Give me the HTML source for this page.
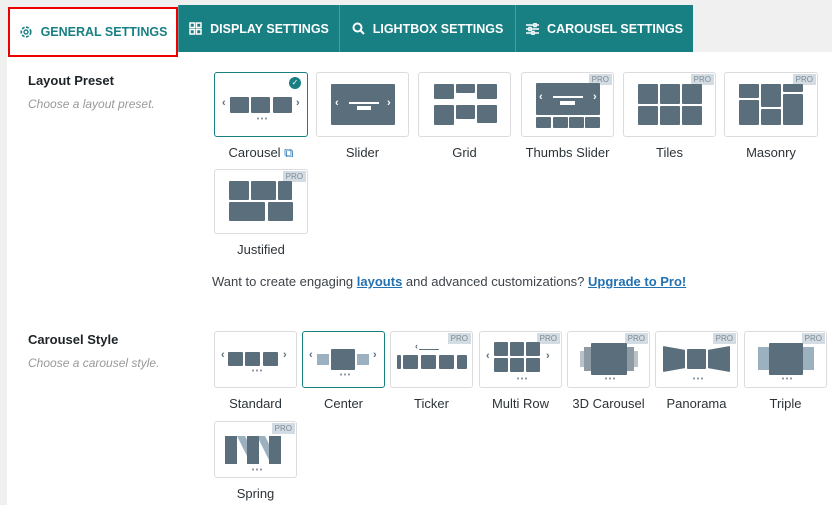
<!DOCTYPE html>
<html><head><meta charset="utf-8"><style>
*{margin:0;padding:0;box-sizing:border-box}
body{width:832px;height:505px;overflow:hidden;background:#f0f0f1;font-family:"Liberation Sans",sans-serif;position:relative;color:#1d2327}
.a{position:absolute}
.main{left:7px;top:52px;width:825px;height:453px;background:#fff}
.tab{top:5px;height:47px;background:#187f83;color:#fff;font-size:12.5px;font-weight:bold;display:flex;align-items:center;justify-content:center;gap:8px;border-left:1px solid #4f9a9d}
.gen{left:8px;top:7px;width:170px;height:50px;background:#fff;border:2px solid #e00;color:#187f83;font-size:12.5px;font-weight:bold;display:flex;align-items:center;justify-content:center;gap:8px}
.h{font-size:13px;font-weight:bold;color:#1d2327}
.sub{font-size:12px;font-style:italic;color:#999}
.card{border:1.5px solid #dcdcde;border-radius:3px;background:#fff}
.sel{border:1.5px solid #187f83}
.lbl{font-size:13px;color:#2c3338;text-align:center}
.b{position:absolute;background:#5b6e7c;border-radius:1px}
.l{position:absolute;background:#9cb1c0}
.pro{position:absolute;right:1px;top:1px;background:#d4dce3;color:#7b8a96;font-size:8px;padding:1px 3px}
.ch{position:absolute;color:#5b6e7c;font-size:11px;font-weight:bold}
.dots{position:absolute;width:12px;height:3px;background:radial-gradient(circle,#8a98a3 1px,transparent 1.2px) 0 0/4px 3px}
a{color:#2271b1;font-weight:bold;text-decoration:underline}
</style></head><body>
<div class="a main"></div>
<div class="a gen"><svg width="14" height="14" viewBox="0 0 14 14"><circle cx="7" cy="7" r="4.8" fill="none" stroke="#187f83" stroke-width="1.6" stroke-dasharray="3 1.5"/><circle cx="7" cy="7" r="2" fill="none" stroke="#187f83" stroke-width="1.4"/></svg>GENERAL SETTINGS</div>
<div class="a tab" style="left:178px;width:161px"><svg width="13" height="13" viewBox="0 0 13 13" fill="none" stroke="#fff" stroke-width="1.5"><rect x="1" y="1" width="4.5" height="4.5"/><rect x="7.5" y="1" width="4.5" height="4.5"/><rect x="1" y="7.5" width="4.5" height="4.5"/><rect x="7.5" y="7.5" width="4.5" height="4.5"/></svg>DISPLAY SETTINGS</div>
<div class="a tab" style="left:339px;width:176px"><svg width="13" height="13" viewBox="0 0 13 13" fill="none" stroke="#fff" stroke-width="2"><circle cx="5.5" cy="5.5" r="4"/><path d="M8.5 8.5L12 12"/></svg>LIGHTBOX SETTINGS</div>
<div class="a tab" style="left:515px;width:178px"><svg width="13" height="12" viewBox="0 0 13 12" stroke="#fff" stroke-width="1.5"><path d="M0 2H13M0 6H13M0 10H13"/><rect x="8" y="0.5" width="2" height="3" fill="#187f83"/><rect x="3" y="4.5" width="2" height="3" fill="#187f83"/><rect x="6" y="8.5" width="2" height="3" fill="#187f83"/></svg>CAROUSEL SETTINGS</div>

<div class="a h" style="left:28px;top:73px">Layout Preset</div>
<div class="a sub" style="left:28px;top:97px">Choose a layout preset.</div>

<div class="a card sel" style="left:214px;top:72px;width:94px;height:65px">
 <div style="position:absolute;right:6px;top:4px;width:12px;height:12px;border-radius:50%;background:#187f83;color:#fff;font-size:8px;text-align:center;line-height:12px">✓</div>
 <span class="ch" style="left:7px;top:24px">‹</span><div class="b" style="left:15px;top:24px;width:19px;height:16px"></div><div class="b" style="left:36px;top:24px;width:19px;height:16px"></div><div class="b" style="left:58px;top:24px;width:19px;height:16px"></div><span class="ch" style="left:81px;top:24px">›</span>
 <div class="dots" style="left:41px;top:44px"></div></div>
<div class="a lbl" style="left:214px;top:145px;width:94px">Carousel <span style="color:#2271b1">⧉</span></div>
<div class="a card" style="left:316px;top:72px;width:93px;height:65px"><div class="b" style="left:14px;top:11px;width:64px;height:41px"></div><span class="ch" style="left:18px;top:24px;color:#fff">‹</span><span class="ch" style="left:70px;top:24px;color:#fff">›</span><div class="l" style="left:32px;top:29px;width:30px;height:2px;background:#fff"></div><div class="l" style="left:40px;top:33px;width:14px;height:4px;background:#fff"></div></div>
<div class="a lbl" style="left:316px;top:145px;width:93px">Slider</div>
<div class="a card" style="left:418px;top:72px;width:93px;height:65px"><div class="b" style="left:15px;top:11px;width:20px;height:15px"></div><div class="b" style="left:37px;top:11px;width:19px;height:9px"></div><div class="b" style="left:58px;top:11px;width:20px;height:15px"></div><div class="b" style="left:15px;top:32px;width:20px;height:20px"></div><div class="b" style="left:37px;top:32px;width:19px;height:14px"></div><div class="b" style="left:58px;top:32px;width:20px;height:18px"></div></div>
<div class="a lbl" style="left:418px;top:145px;width:93px">Grid</div>
<div class="a card" style="left:521px;top:72px;width:93px;height:65px"><div class="pro">PRO</div><div class="b" style="left:14px;top:10px;width:64px;height:32px"></div><span class="ch" style="left:17px;top:18px;color:#fff">‹</span><span class="ch" style="left:71px;top:18px;color:#fff">›</span><div class="l" style="left:31px;top:23px;width:30px;height:2px;background:#fff"></div><div class="l" style="left:38px;top:28px;width:15px;height:4px;background:#fff"></div><div class="b" style="left:14px;top:44px;width:15px;height:11px"></div><div class="b" style="left:31px;top:44px;width:15px;height:11px"></div><div class="b" style="left:47px;top:44px;width:15px;height:11px"></div><div class="b" style="left:63px;top:44px;width:15px;height:11px"></div></div>
<div class="a lbl" style="left:521px;top:145px;width:93px">Thumbs Slider</div>
<div class="a card" style="left:623px;top:72px;width:93px;height:65px"><div class="pro">PRO</div><div class="b" style="left:14px;top:11px;width:20px;height:20px"></div><div class="b" style="left:36px;top:11px;width:20px;height:20px"></div><div class="b" style="left:58px;top:11px;width:20px;height:20px"></div><div class="b" style="left:14px;top:33px;width:20px;height:19px"></div><div class="b" style="left:36px;top:33px;width:20px;height:19px"></div><div class="b" style="left:58px;top:33px;width:20px;height:19px"></div></div>
<div class="a lbl" style="left:623px;top:145px;width:93px">Tiles</div>
<div class="a card" style="left:724px;top:72px;width:94px;height:65px"><div class="pro">PRO</div><div class="b" style="left:14px;top:11px;width:20px;height:14px"></div><div class="b" style="left:36px;top:11px;width:20px;height:23px"></div><div class="b" style="left:58px;top:11px;width:20px;height:8px"></div><div class="b" style="left:14px;top:27px;width:20px;height:25px"></div><div class="b" style="left:36px;top:36px;width:20px;height:16px"></div><div class="b" style="left:58px;top:21px;width:20px;height:31px"></div></div>
<div class="a lbl" style="left:724px;top:145px;width:94px">Masonry</div>
<div class="a card" style="left:214px;top:169px;width:94px;height:65px"><div class="pro">PRO</div><div class="b" style="left:14px;top:11px;width:20px;height:19px"></div><div class="b" style="left:36px;top:11px;width:25px;height:19px"></div><div class="b" style="left:63px;top:11px;width:14px;height:19px"></div><div class="b" style="left:14px;top:32px;width:36px;height:19px"></div><div class="b" style="left:53px;top:32px;width:25px;height:19px"></div></div>
<div class="a lbl" style="left:214px;top:242px;width:94px">Justified</div>

<div class="a" style="left:212px;top:274px;font-size:13px;color:#3c434a">Want to create engaging <a>layouts</a> and advanced customizations? <a>Upgrade to Pro!</a></div>

<div class="a h" style="left:28px;top:332px">Carousel Style</div>
<div class="a sub" style="left:28px;top:356px">Choose a carousel style.</div>

<div class="a card" style="left:214px;top:331px;width:83px;height:57px"><span class="ch" style="left:6px;top:17px">‹</span><div class="b" style="left:13px;top:20px;width:15px;height:14px"></div><div class="b" style="left:30px;top:20px;width:15px;height:14px"></div><div class="b" style="left:48px;top:20px;width:15px;height:14px"></div><span class="ch" style="left:68px;top:17px">›</span><div class="dots" style="left:36px;top:37px"></div></div>
<div class="a lbl" style="left:214px;top:396px;width:83px">Standard</div>
<div class="a card sel" style="left:302px;top:331px;width:83px;height:57px"><span class="ch" style="left:6px;top:17px">‹</span><div class="l" style="left:14px;top:22px;width:12px;height:11px"></div><div class="b" style="left:28px;top:17px;width:24px;height:21px"></div><div class="l" style="left:54px;top:22px;width:12px;height:11px"></div><span class="ch" style="left:70px;top:17px">›</span><div class="dots" style="left:36px;top:41px"></div></div>
<div class="a lbl" style="left:302px;top:396px;width:83px">Center</div>
<div class="a card" style="left:390px;top:331px;width:83px;height:57px"><div class="pro">PRO</div><div class="b" style="left:28px;top:17px;width:20px;height:1px"></div><span class="ch" style="left:24px;top:9px;font-size:9px">‹</span><div class="b" style="left:6px;top:23px;width:4px;height:14px"></div><div class="b" style="left:12px;top:23px;width:15px;height:14px"></div><div class="b" style="left:30px;top:23px;width:15px;height:14px"></div><div class="b" style="left:48px;top:23px;width:15px;height:14px"></div><div class="b" style="left:66px;top:23px;width:10px;height:14px"></div></div>
<div class="a lbl" style="left:390px;top:396px;width:83px">Ticker</div>
<div class="a card" style="left:479px;top:331px;width:83px;height:57px"><div class="pro">PRO</div><span class="ch" style="left:6px;top:18px">‹</span><div class="b" style="left:14px;top:10px;width:14px;height:14px"></div><div class="b" style="left:30px;top:10px;width:14px;height:14px"></div><div class="b" style="left:46px;top:10px;width:14px;height:14px"></div><div class="b" style="left:14px;top:26px;width:14px;height:14px"></div><div class="b" style="left:30px;top:26px;width:14px;height:14px"></div><div class="b" style="left:46px;top:26px;width:14px;height:14px"></div><span class="ch" style="left:66px;top:18px">›</span><div class="dots" style="left:36px;top:45px"></div></div>
<div class="a lbl" style="left:479px;top:396px;width:83px">Multi Row</div>
<div class="a card" style="left:567px;top:331px;width:83px;height:57px"><div class="pro">PRO</div><div class="l" style="left:12px;top:19px;width:58px;height:16px;background:#b8c2c8"></div><div class="l" style="left:16px;top:15px;width:50px;height:24px;background:#8e9ba5"></div><div class="b" style="left:23px;top:11px;width:36px;height:32px"></div><div class="dots" style="left:36px;top:45px"></div></div>
<div class="a lbl" style="left:567px;top:396px;width:83px">3D Carousel</div>
<div class="a card" style="left:655px;top:331px;width:83px;height:57px"><div class="pro">PRO</div><div class="b" style="left:7px;top:14px;width:22px;height:26px;clip-path:polygon(0 0,100% 15%,100% 85%,0 100%)"></div><div class="b" style="left:31px;top:17px;width:19px;height:20px"></div><div class="b" style="left:52px;top:14px;width:22px;height:26px;clip-path:polygon(0 15%,100% 0,100% 100%,0 85%)"></div><div class="dots" style="left:36px;top:45px"></div></div>
<div class="a lbl" style="left:655px;top:396px;width:83px">Panorama</div>
<div class="a card" style="left:744px;top:331px;width:83px;height:57px"><div class="pro">PRO</div><div class="l" style="left:13px;top:15px;width:56px;height:23px"></div><div class="b" style="left:24px;top:11px;width:34px;height:32px"></div><div class="dots" style="left:36px;top:45px"></div></div>
<div class="a lbl" style="left:744px;top:396px;width:83px">Triple</div>
<div class="a card" style="left:214px;top:421px;width:83px;height:57px"><div class="pro">PRO</div>
<svg style="position:absolute;left:10px;top:14px" width="60" height="28"><polygon points="12,0 20,0 34,28 26,28" fill="#9cb1c0"/><polygon points="32,0 40,0 54,28 46,28" fill="#9cb1c0"/><rect x="0" y="0" width="12" height="28" fill="#5b6e7c"/><rect x="22" y="0" width="12" height="28" fill="#5b6e7c"/><rect x="44" y="0" width="12" height="28" fill="#5b6e7c"/></svg>
<div class="dots" style="left:36px;top:46px"></div></div>
<div class="a lbl" style="left:214px;top:486px;width:83px">Spring</div>
</body></html>
